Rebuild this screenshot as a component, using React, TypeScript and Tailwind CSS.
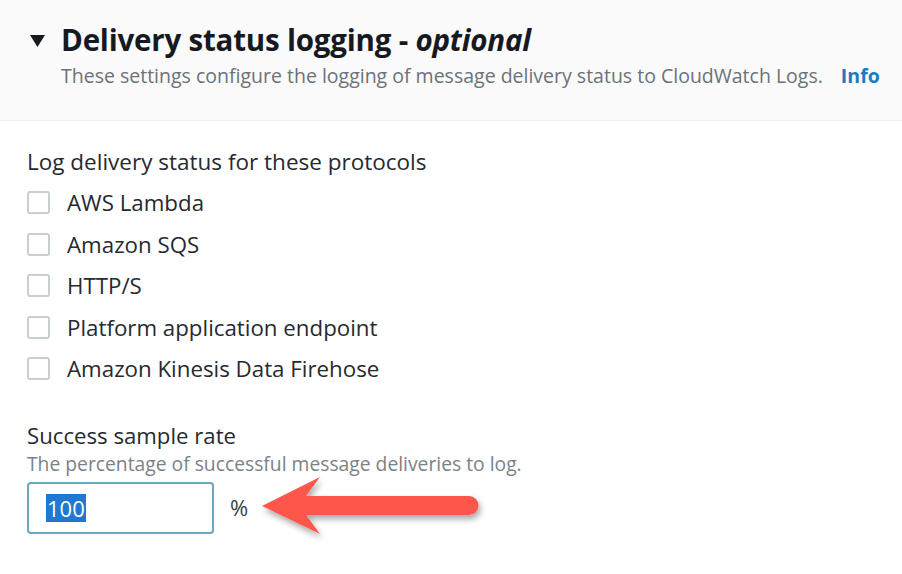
import React from 'react';

const protocols = [
  'AWS Lambda',
  'Amazon SQS',
  'HTTP/S',
  'Platform application endpoint',
  'Amazon Kinesis Data Firehose',
];

const Arrow = () => (
  <svg width="236" height="76" viewBox="0 0 236 76" className="block">
    <defs>
      <filter id="shadow" x="-10%" y="-30%" width="130%" height="170%">
        <feDropShadow dx="2" dy="4" stdDeviation="3" floodColor="#000" floodOpacity="0.35" />
      </filter>
    </defs>
    {/* arrow head tip at x=4, shaft ending with a rounded cap */}
    <path
      d="M4 37 L62 8 L48 27 L211 27 A9.5 9.5 0 0 1 211 46 L48 46 L62 65 Z"
      fill="#fe574b"
      filter="url(#shadow)"
    />
  </svg>
);

export default function App() {
  return (
    <div className="w-[902px] h-[574px] overflow-hidden bg-white font-['Open_Sans',sans-serif] text-[#16191f]">
      <div className="h-[121px] border-b border-[#eceeee] bg-[#fafafa] pl-[30px] pt-[20px]">
        <div className="flex items-center gap-[16px]">
          <svg width="15" height="12" viewBox="0 0 15 12" className="mt-[2px]">
            <path d="M0 0 L15 0 L7.5 12 Z" fill="#16191f" />
          </svg>
          <h2 className="text-[29.5px] font-bold leading-[40px] tracking-[-0.2px]">
            Delivery status logging - <i className="font-bold">optional</i>
          </h2>
        </div>
        <p className="ml-[31px] mt-[2px] text-[19.5px] leading-[28px] text-[#6b7278]">
          These settings configure the logging of message delivery status to CloudWatch Logs.
          <span className="ml-[18px] font-bold text-[#1a7bbf]">Info</span>
        </p>
      </div>

      <div className="pl-[27px] pt-[26px]">
        <div className="text-[22.5px] leading-[30px] text-[#262a30]">Log delivery status for these protocols</div>
        <div className="mt-[5px] flex flex-col">
          {protocols.map((p) => (
            <label key={p} className="flex h-[41.5px] items-center gap-[17px]">
              <span className="h-[23px] w-[23px] rounded-[3px] border-2 border-[#c9cfcf] bg-white" />
              <span className="text-[22.3px] text-[#262a30]">{p}</span>
            </label>
          ))}
        </div>

        <div className="mt-[31px] text-[22.2px] leading-[30px] text-[#262a30]">Success sample rate</div>
        <div className="text-[19.3px] leading-[26px] text-[#7b8287]">
          The percentage of successful message deliveries to log.
        </div>
        <div className="mt-[5px] flex h-[52px] items-center">
          <div className="flex h-[52px] w-[187px] shrink-0 items-center rounded-[4px] border-2 border-[#6aa9ba] pl-[17px]">
            <span className="bg-[#1f78d1] px-[1px] text-[22px] leading-[28px] text-white">100</span>
          </div>
          <span className="ml-[16px] w-[24px] text-[22px] text-[#3a3f45]">%</span>
          <div className="-my-[12px] ml-[4px] -mt-[13px]">
            <Arrow />
          </div>
        </div>
      </div>
    </div>
  );
}
